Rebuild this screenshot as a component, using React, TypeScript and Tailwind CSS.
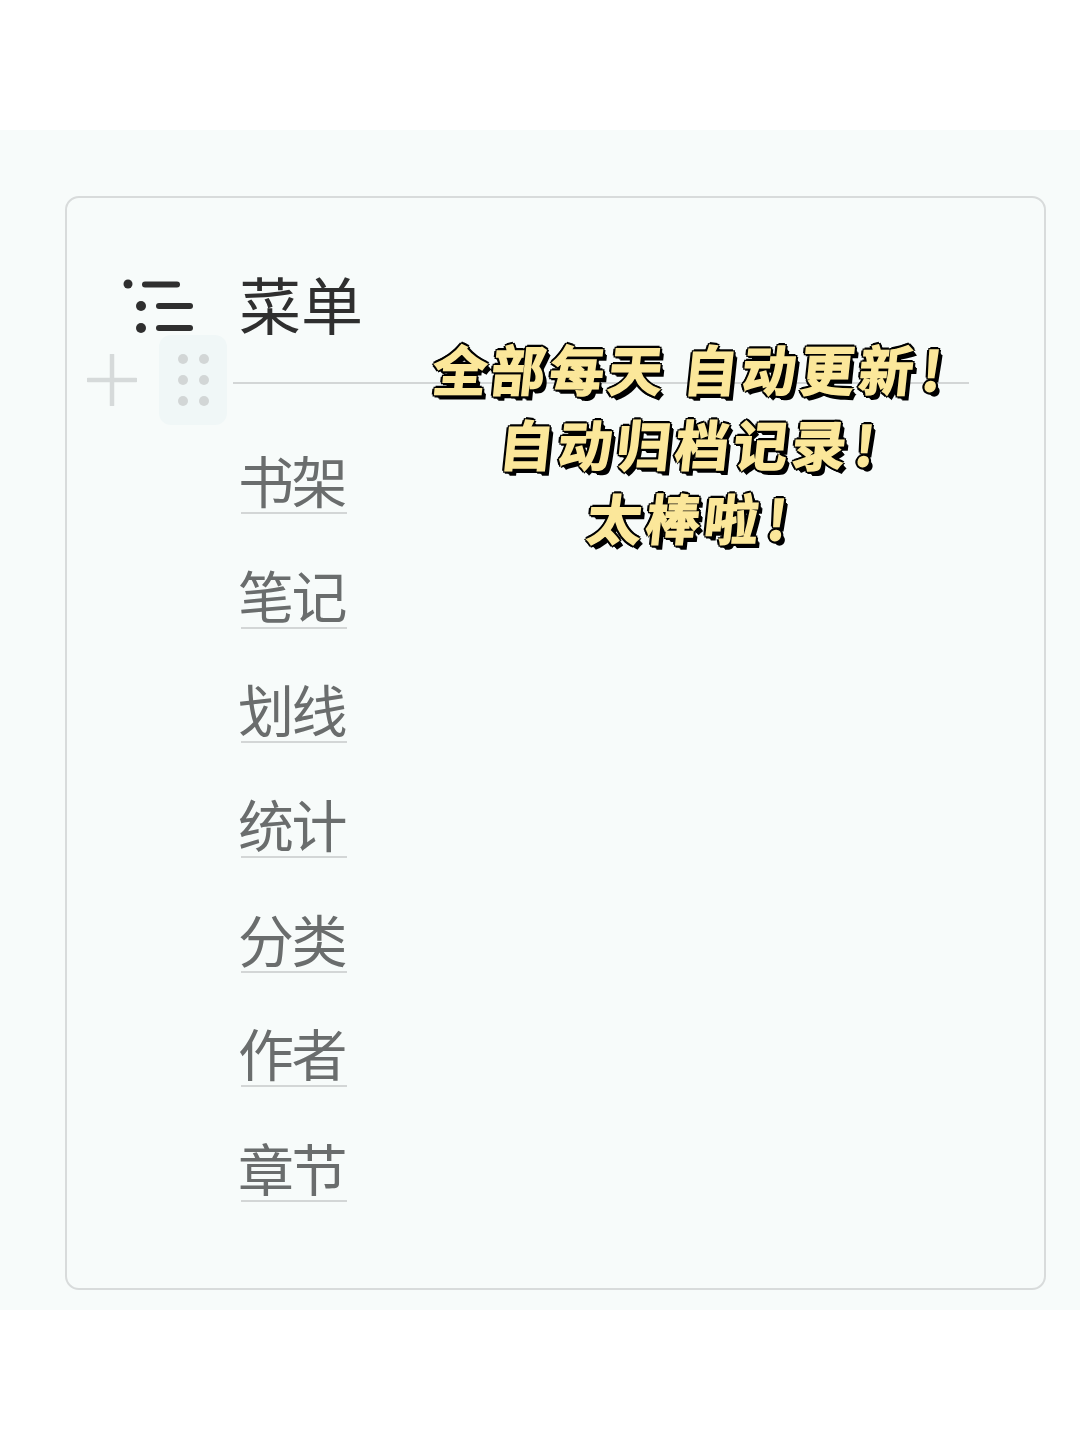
const LINKS = ['书架', '笔记', '划线', '统计', '分类', '作者', '章节']

const CJK = "font-['Noto_Sans_CJK_SC','Noto_Sans_CJK_JP',sans-serif]"

function MenuIcon() {
  return (
    <svg width="74" height="56" viewBox="0 0 74 56" className="shrink-0">
      <g fill="#2f2f2f">
        <circle cx="5" cy="5" r="4.5" />
        <circle cx="18" cy="27" r="5" />
        <circle cx="18" cy="49" r="5" />
      </g>
      <g stroke="#2f2f2f" strokeWidth="6" strokeLinecap="round">
        <path d="M22 5.5H54" />
        <path d="M36 27H67" />
        <path d="M36 49H67" />
      </g>
    </svg>
  )
}

function PlusIcon() {
  return (
    <svg width="50" height="52" viewBox="0 0 50 52" className="shrink-0">
      <path d="M25 1V51M1 26H49" stroke="#d6dada" strokeWidth="4.5" strokeLinecap="round" />
    </svg>
  )
}

function DragHandle() {
  return (
    <div className="w-[68px] h-[90px] rounded-xl bg-[#f0f7f7] grid grid-cols-[10px_10px] grid-rows-[10px_10px_10px] gap-[11px] justify-center content-center shrink-0">
      {[0, 1, 2, 3, 4, 5].map((i) => (
        <div key={i} className="w-[10px] h-[10px] rounded-full bg-[#d2d6d6]" />
      ))}
    </div>
  )
}

export default function App() {
  return (
    <div className={`w-[1080px] h-[1440px] bg-white pt-[130px] ${CJK}`}>
      <div className="relative h-[1180px] bg-[#f7fbfa] px-[65px] pt-[66px]">
        <div className="h-[1094px] w-[981px] rounded-[14px] border-2 border-[#d8dbdb] pl-[20px] pt-[76px] blur-[0.7px]">
          <div className="flex items-center gap-[42px] pl-[36px] h-[66px]">
            <MenuIcon />
            <h1 className="text-[62px] leading-[66px] font-normal text-[#2f2f2f] mt-[-8px]">菜单</h1>
          </div>
          <div className="flex items-center mt-[-5px]">
            <PlusIcon />
            <div className="ml-[22px]">
              <DragHandle />
            </div>
            <div className="ml-[6px] mt-[5px] h-[2px] w-[736px] bg-[#d3d6d6]" />
          </div>
          <nav className="flex flex-col items-start gap-[47.7px] pl-[154px] pt-[22px]">
            {LINKS.map((name) => (
              <a
                key={name}
                className="block h-[67px] w-[106px] border-b-2 border-[#d3d6d6] text-[56px] leading-[64px] tracking-[-2.5px] indent-[-3px] text-[#6a6d6d] whitespace-nowrap"
              >
                {name}
              </a>
            ))}
          </nav>
        </div>

        <div className="absolute left-[428px] top-[201px] w-[524px] text-center text-[54px] leading-[74.5px] font-bold text-[#fbe79a] tracking-[4.5px] [-webkit-text-stroke:1.5px_#fbe79a] [text-shadow:-2px_-2px_0_#000,2px_-2px_0_#000,-2px_2px_0_#000,2px_2px_0_#000,0_-3px_0_#000,-3px_0_0_#000,3px_0_0_#000,0_3px_0_#000,3px_3px_0_#000,4px_4px_0_#000,5px_5px_0_#000]">
          <div className="-skew-x-6 whitespace-nowrap">全部每天 自动更新<span className="ml-[4px]">!</span></div>
          <div className="-skew-x-6 whitespace-nowrap">自动归档记录<span className="ml-[4px]">!</span></div>
          <div className="-skew-x-6 whitespace-nowrap">太棒啦<span className="ml-[4px]">!</span></div>
        </div>
      </div>
    </div>
  )
}
